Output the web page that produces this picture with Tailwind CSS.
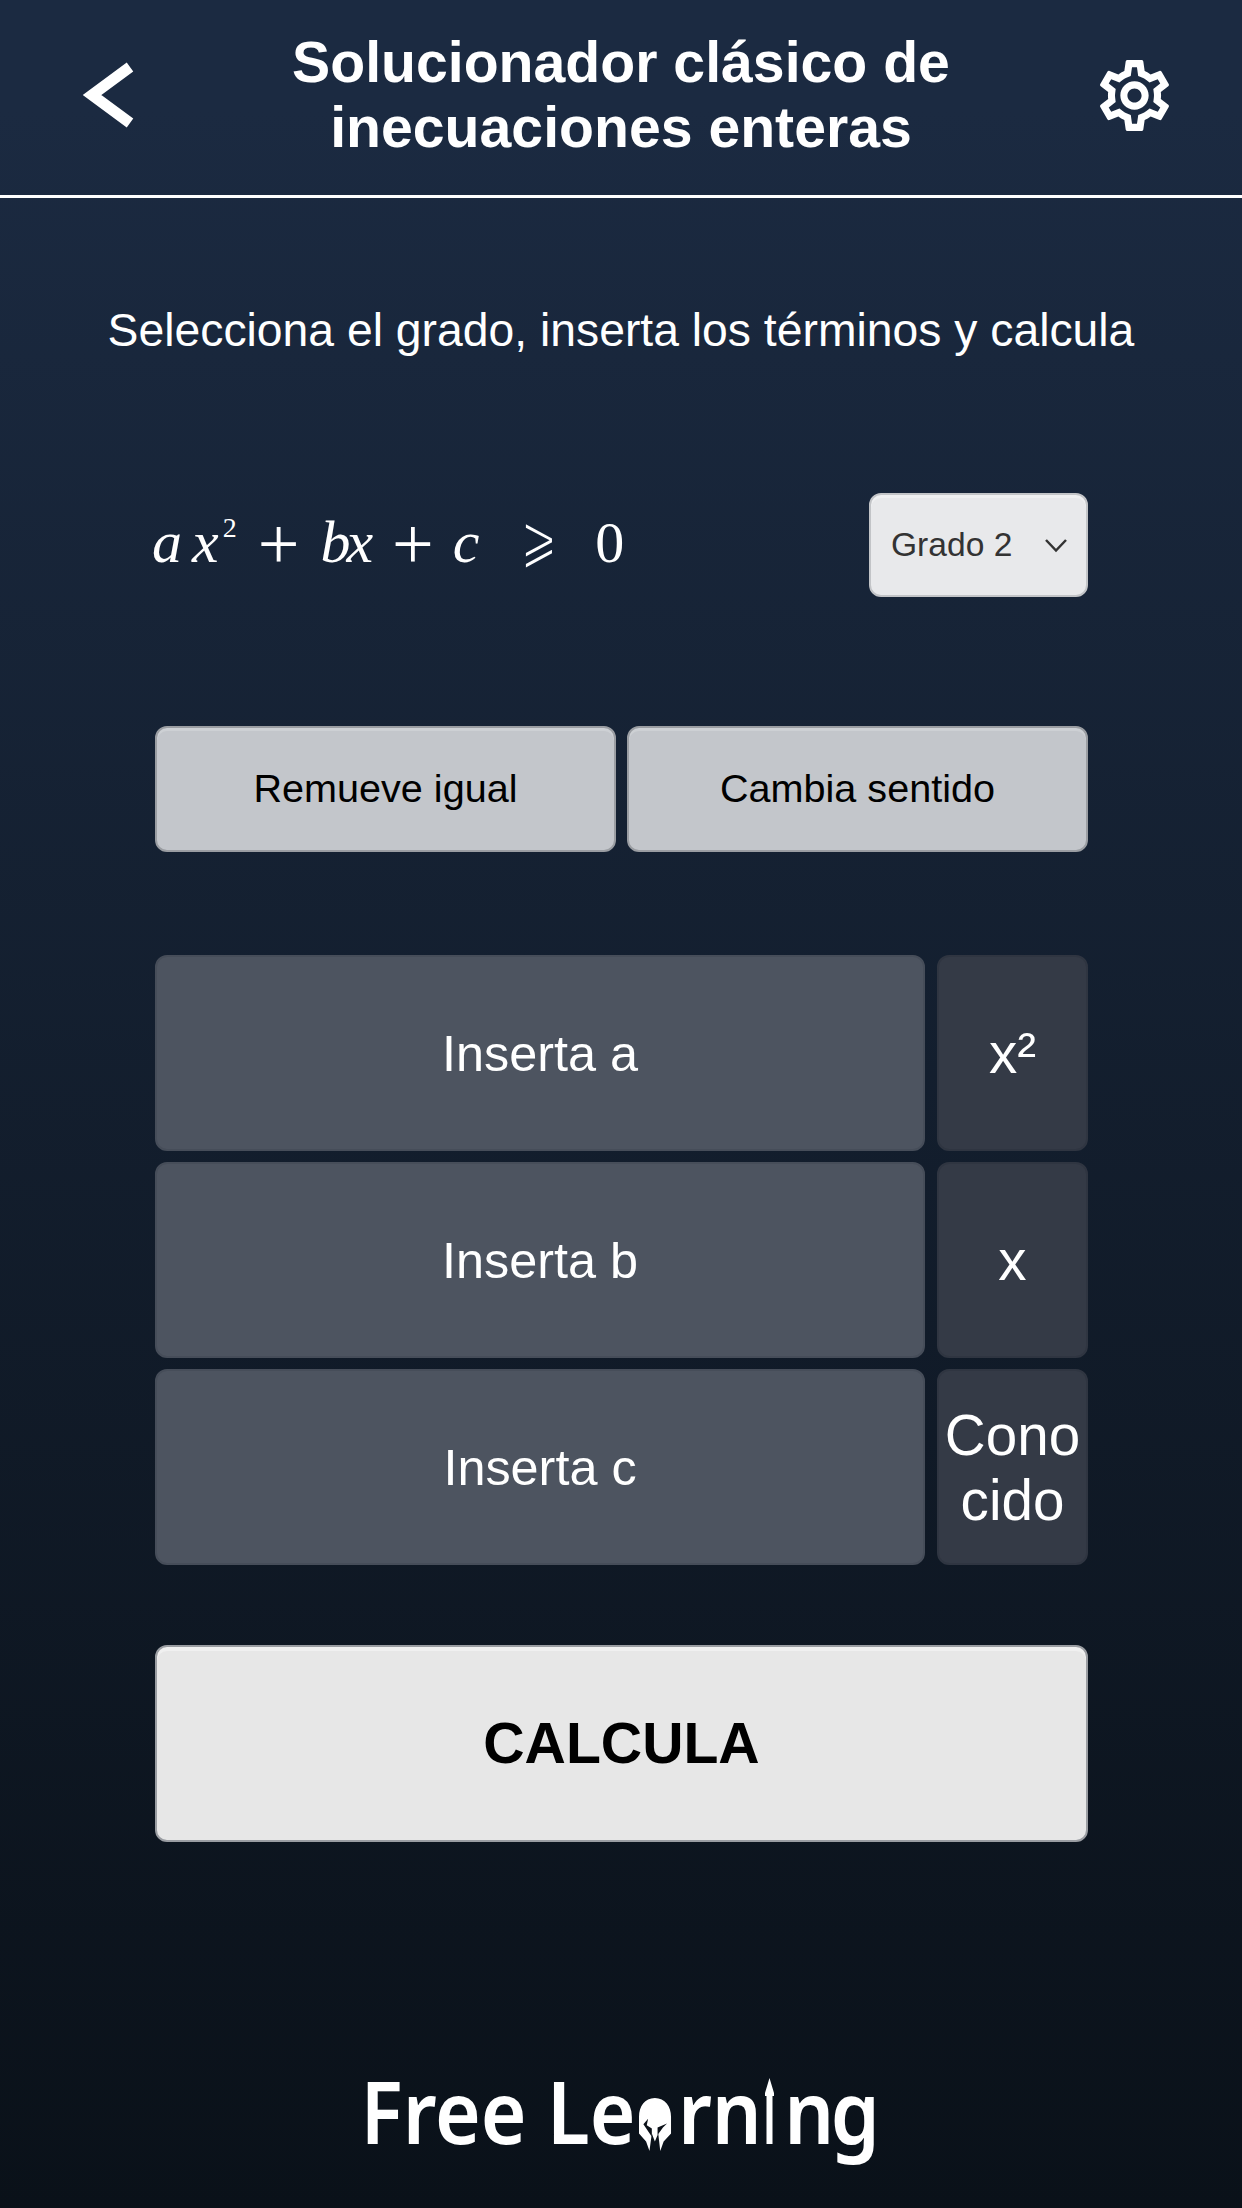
<!DOCTYPE html>
<html><head><meta charset="utf-8"><script src="https://cdn.jsdelivr.net/npm/@tailwindcss/browser@4"></script></head>
<body class="m-0">
<div class="w-[1242px] h-[2208px] flex flex-col overflow-hidden text-white font-['Liberation_Sans',Arial,sans-serif] bg-gradient-to-b from-[#1b2a41] from-[5%] to-[#0a1119] to-[100%]">
  <header class="h-[198px] shrink-0 border-b-[3px] border-white flex items-center justify-between pb-[5px]">
    <div class="w-[216px] pl-[76px] flex items-center">
      <svg width="66" height="76" viewBox="0 0 66 76" fill="none" stroke="white" stroke-width="11"><path d="M54 10 L16 38 L54 66"/></svg>
    </div>
    <h1 class="text-[57.2px] leading-[65px] font-bold text-center flex-1 whitespace-nowrap">Solucionador clásico de<br>inecuaciones enteras</h1>
    <div class="w-[216px] pl-[66px] flex items-center">
      <svg width="85" height="85" viewBox="0 0 24 24" fill="white"><path d="M19.43 12.98c.04-.32.07-.64.07-.98 0-.34-.03-.66-.07-.98l2.11-1.65c.19-.15.24-.42.12-.64l-2-3.46c-.09-.16-.26-.25-.44-.25-.06 0-.12.01-.17.03l-2.49 1c-.52-.4-1.08-.73-1.69-.98l-.38-2.65C14.46 2.18 14.25 2 14 2h-4c-.25 0-.46.18-.49.42l-.38 2.65c-.61.25-1.17.59-1.69.98l-2.49-1c-.06-.02-.12-.03-.18-.03-.17 0-.34.09-.43.25l-2 3.46c-.13.22-.07.49.12.64l2.11 1.65c-.04.32-.07.65-.07.98 0 .33.03.66.07.98l-2.11 1.65c-.19.15-.24.42-.12.64l2 3.46c.09.16.26.25.44.25.06 0 .12-.01.17-.03l2.49-1c.52.4 1.08.73 1.69.98l.38 2.65c.03.24.24.42.49.42h4c.25 0 .46-.18.49-.42l.38-2.65c.61-.25 1.17-.59 1.69-.98l2.49 1c.06.02.12.03.18.03.17 0 .34-.09.43-.25l2-3.46c.12-.22.07-.49-.12-.64l-2.11-1.65zm-1.98-1.71c.04.31.05.52.05.73 0 .21-.02.43-.05.73l-.14 1.13.89.7 1.08.84-.7 1.21-1.27-.51-1.04-.42-.9.68c-.43.32-.84.56-1.25.73l-1.06.43-.16 1.13-.2 1.35h-1.4l-.19-1.35-.16-1.13-1.06-.43c-.43-.18-.83-.41-1.23-.71l-.91-.7-1.06.43-1.27.51-.7-1.21 1.08-.84.89-.7-.14-1.13c-.03-.31-.05-.54-.05-.74s.02-.43.05-.73l.14-1.13-.89-.7-1.08-.84.7-1.21 1.27.51 1.04.42.9-.68c.43-.32.84-.56 1.25-.73l1.06-.43.16-1.13.2-1.35h1.39l.19 1.35.16 1.13 1.06.43c.43.18.83.41 1.23.71l.91.7 1.06-.43 1.27-.51.7 1.21-1.07.85-.89.7.14 1.13zM12 8c-2.21 0-4 1.79-4 4s1.79 4 4 4 4-1.79 4-4-1.79-4-4-4zm0 6c-1.1 0-2-.9-2-2s.9-2 2-2 2 .9 2 2-.9 2-2 2z"/></svg>
    </div>
  </header>
  <p class="mt-[105px] text-[46.3px] leading-[54px] text-center whitespace-nowrap">Selecciona el grado, inserta los términos y calcula</p>
  <div class="mt-[136px] ml-[152px] mr-[154px] h-[104px] flex items-center justify-between">
    <div class="mb-[16px] font-['Liberation_Serif',serif] text-[60px] leading-none font-normal whitespace-nowrap flex items-baseline"><i>a</i><i class="ml-[10px]">x</i><sup class="text-[28px] top-[-25px] ml-[4px] relative align-baseline">2</sup><span class="ml-[21px] text-[74px] translate-y-[7px]">+</span><i class="ml-[21px]">b</i><i class="ml-[-4px]">x</i><span class="ml-[19px] text-[74px] translate-y-[7px]">+</span><i class="ml-[19px]">c</i><span class="ml-[41px] text-[44px] font-['DejaVu_Sans',sans-serif] [-webkit-text-stroke:1.5px_#17253a] scale-y-150 -translate-y-[9px]">⩾</span><span class="ml-[38px] text-[58px]">0</span></div>
    <div class="w-[219px] h-[104px] bg-[#e8e9eb] rounded-[12px] border-2 border-[#c2c4c7] shadow-[inset_0_3px_0_#eff0f1] flex items-center justify-between pl-[20px] pr-[18px] text-[#333] text-[33.6px]">Grado 2<svg width="24" height="15" viewBox="0 0 24 15" fill="none" stroke="#333" stroke-width="2.5"><path d="M2 2 L12 12.5 L22 2"/></svg></div>
  </div>
  <div class="mt-[129px] ml-[155px] mr-[154px] grid grid-cols-2 gap-[11px] text-black text-[39.6px]">
    <div class="h-[126px] rounded-[12px] border-2 border-[#9a9da2] shadow-[inset_0_3px_0_#cdd0d4] bg-[#c3c6cb] flex items-center justify-center">Remueve igual</div>
    <div class="h-[126px] rounded-[12px] border-2 border-[#9a9da2] shadow-[inset_0_3px_0_#cdd0d4] bg-[#c3c6cb] flex items-center justify-center">Cambia sentido</div>
  </div>
  <div class="mt-[103px] ml-[155px] mr-[154px] grid grid-cols-[770px_151px] gap-x-[12px] gap-y-[11px] auto-rows-[196px] text-[50.4px]">
    <div class="rounded-[12px] border-2 border-[#464d59] bg-[#4d5460] pt-[2px] flex items-center justify-center">Inserta a</div>
    <div class="rounded-[12px] border-2 border-[#2f3541] bg-[#343a46] pt-[2px] flex items-center justify-center text-[56.6px]">x²</div>
    <div class="rounded-[12px] border-2 border-[#464d59] bg-[#4d5460] pt-[2px] flex items-center justify-center">Inserta b</div>
    <div class="rounded-[12px] border-2 border-[#2f3541] bg-[#343a46] pt-[2px] flex items-center justify-center text-[56.6px]">x</div>
    <div class="rounded-[12px] border-2 border-[#464d59] bg-[#4d5460] pt-[2px] flex items-center justify-center">Inserta c</div>
    <div class="rounded-[12px] border-2 border-[#2f3541] bg-[#343a46] pt-[2px] flex items-center justify-center text-[56.6px] leading-[65px] text-center">Cono<br>cido</div>
  </div>
  <div class="mt-[80px] ml-[155px] mr-[154px] h-[197px] rounded-[12px] border-2 border-[#9a9da2] shadow-[inset_0_4px_0_#f0f0f0] bg-[#e7e7e7] flex items-center justify-center text-black text-[57.2px] font-bold">CALCULA</div>
  <div class="mt-auto h-[158px] pr-[6px] flex justify-center items-baseline scale-x-[0.9] font-['Noto_Sans',sans-serif] font-semibold text-[87px] leading-[120px] whitespace-nowrap">
    <span>Free Le</span>
    <svg class="ml-[4px] mr-[7px] translate-y-[7px]" width="36" height="53" viewBox="35 83 96 160" preserveAspectRatio="none"><path fill="white" d="M82 83C112 83 130 108 130 140V190L108 214 98 243 92 190 82 214 73 190 66 243 56 214 35 190V140C35 108 52 83 82 83Z"/><path fill="#0b1119" d="M48 162 62 146 58 165 73 175 73 200ZM118 160 90 172 90 195 106 172Z"/></svg>
    <span>rn</span>
    <svg class="ml-[4px] mr-[11px]" width="10" height="66" viewBox="0 0 9 66" preserveAspectRatio="none" fill="white"><path d="M4.5 0L9 15V18H7.5V66H1.5V18H0V15Z"/></svg>
    <span class="tracking-[-4px]">ng</span>
  </div>
</div>
</body></html>
